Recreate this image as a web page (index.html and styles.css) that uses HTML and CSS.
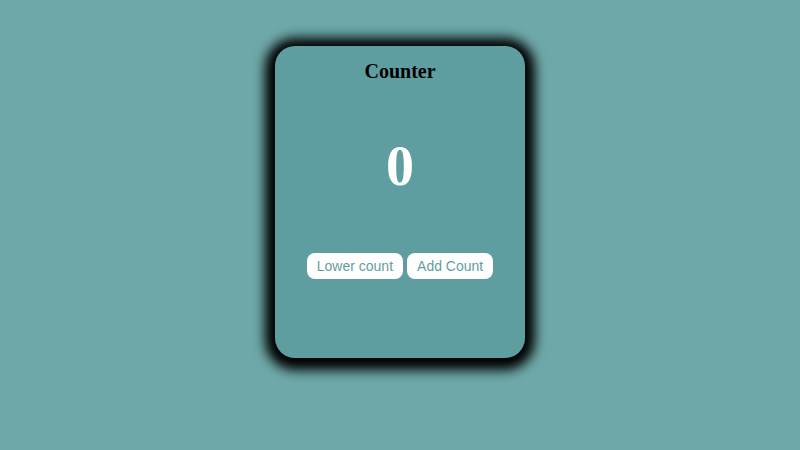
FILE: index.html
```html
<!DOCTYPE html>
<html lang="en">
<head>
    <meta charset="UTF-8">
    <meta name="viewport" content="width=device-width, initial-scale=1.0">
    <title>Counter</title>
    <link rel="stylesheet" href="styles.css">
</head>
<body>
    <div class="counter-card">
        <h2>Counter</h2>
        <p id="count" class="count">0</p>
        <div class="controls">
            <button onclick="changeCount(-1)">Lower count</button>
            <button onclick="changeCount(1)">Add Count</button>
        </div>
    </div>
    <script>
        let count = 0;

        function changeCount(step) {
            count += step;
            document.getElementById("count").textContent = count;
        }
    </script>
</body>
</html>
```

FILE: styles.css
```css
body {
    margin: 0;
    min-height: 100vh;
    padding-top: 46px;
    box-sizing: border-box;
    background-color: #6ea8a8;
    font-family: "Liberation Serif", "Times New Roman", serif;
}
.counter-card {
    width: 250px;
    height: 312px;
    box-sizing: border-box;
    margin: 0 auto;
    padding-top: 13px;
    background-color: #5f9ea0;
    border-radius: 20px;
    box-shadow: 0 2px 12px 10px #000;
    text-align: center;
}
h2 {
    margin: 0;
    font-size: 20px;
    line-height: 24px;
    color: #000;
}
.count {
    margin: 51px 0 0;
    font-size: 56px;
    line-height: 64px;
    font-weight: bold;
    color: white;
}
.controls {
    margin-top: 55px;
}
button {
    padding: 5px 10px;
    font-family: "Liberation Sans", Arial, sans-serif;
    font-size: 14px;
    line-height: 16px;
    color: #5f9ea0;
    background-color: white;
    border: none;
    border-radius: 8px;
    cursor: pointer;
}
```
